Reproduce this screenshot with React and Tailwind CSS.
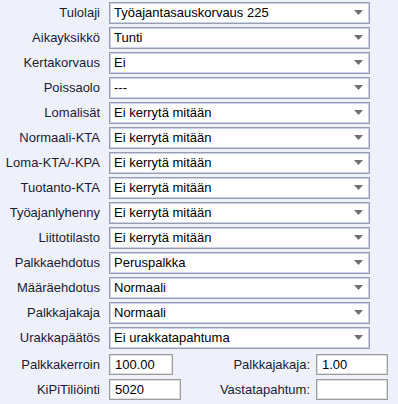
import React from 'react';

const rows = [
  { label: '', value: '' },
  { label: 'Tulolaji', value: 'Työajantasauskorvaus 225' },
  { label: 'Aikayksikkö', value: 'Tunti' },
  { label: 'Kertakorvaus', value: 'Ei' },
  { label: 'Poissaolo', value: '---' },
  { label: 'Lomalisät', value: 'Ei kerrytä mitään' },
  { label: 'Normaali-KTA', value: 'Ei kerrytä mitään' },
  { label: 'Loma-KTA/-KPA', value: 'Ei kerrytä mitään' },
  { label: 'Tuotanto-KTA', value: 'Ei kerrytä mitään' },
  { label: 'Työajanlyhenny', value: 'Ei kerrytä mitään' },
  { label: 'Liittotilasto', value: 'Ei kerrytä mitään' },
  { label: 'Palkkaehdotus', value: 'Peruspalkka' },
  { label: 'Määräehdotus', value: 'Normaali' },
  { label: 'Palkkajakaja', value: 'Normaali' },
  { label: 'Urakkapäätös', value: 'Ei urakkatapahtuma' },
];

function SelectRow({ label, value }) {
  return (
    <div className="flex h-[25px] items-center">
      <div className="w-[101px] pr-[1px] text-right text-[#1b1b33]">{label}</div>
      <div className="ml-[8px] flex h-[22px] w-[261px] items-center justify-between border border-[#9a9eaa] bg-white pl-[4px] pr-[6px] text-black shadow-[inset_0_0_0_1px_#c9d2ea]">
        <span>{value}</span>
        <svg width="9" height="5" viewBox="0 0 9 5">
          <path d="M0 0 H9 L4.5 5 Z" fill="#6f6f6f" />
        </svg>
      </div>
    </div>
  );
}

function TextBox({ value, width }) {
  return (
    <div
      className={`flex h-[21px] items-center border border-[#9c9c9c] bg-white pl-[5px] text-black shadow-[inset_0_0_0_1px_#dedede] ${width}`}
    >
      {value}
    </div>
  );
}

export default function App() {
  return (
    <div
      className="h-[404px] w-[398px] overflow-hidden bg-[#eef1f9] text-[13px]"
      style={{ fontFamily: '"Liberation Sans", Arial, sans-serif' }}
    >
      <div className="-mt-[25px]">
        {rows.map((r, i) => (
          <SelectRow key={i} label={r.label} value={r.value} />
        ))}

        <div className="mt-[2px] flex h-[25px] items-center">
          <div className="w-[101px] pr-[1px] text-right text-[#1b1b33]">Palkkakerroin</div>
          <div className="ml-[8px]">
            <TextBox value="100.00" width="w-[64px]" />
          </div>
          <div className="flex-1 pr-[6px] text-right text-[#1b1b33]">Palkkajakaja:</div>
          <TextBox value="1.00" width="w-[72px]" />
          <div className="w-[10px]" />
        </div>

        <div className="flex h-[25px] items-center">
          <div className="w-[101px] pr-[1px] text-right text-[#1b1b33]">KiPiTiliöinti</div>
          <div className="ml-[8px]">
            <TextBox value="5020" width="w-[72px]" />
          </div>
          <div className="flex-1 pr-[6px] text-right text-[#1b1b33]">Vastatapahtum:</div>
          <TextBox value="" width="w-[72px]" />
          <div className="w-[10px]" />
        </div>
      </div>
    </div>
  );
}
